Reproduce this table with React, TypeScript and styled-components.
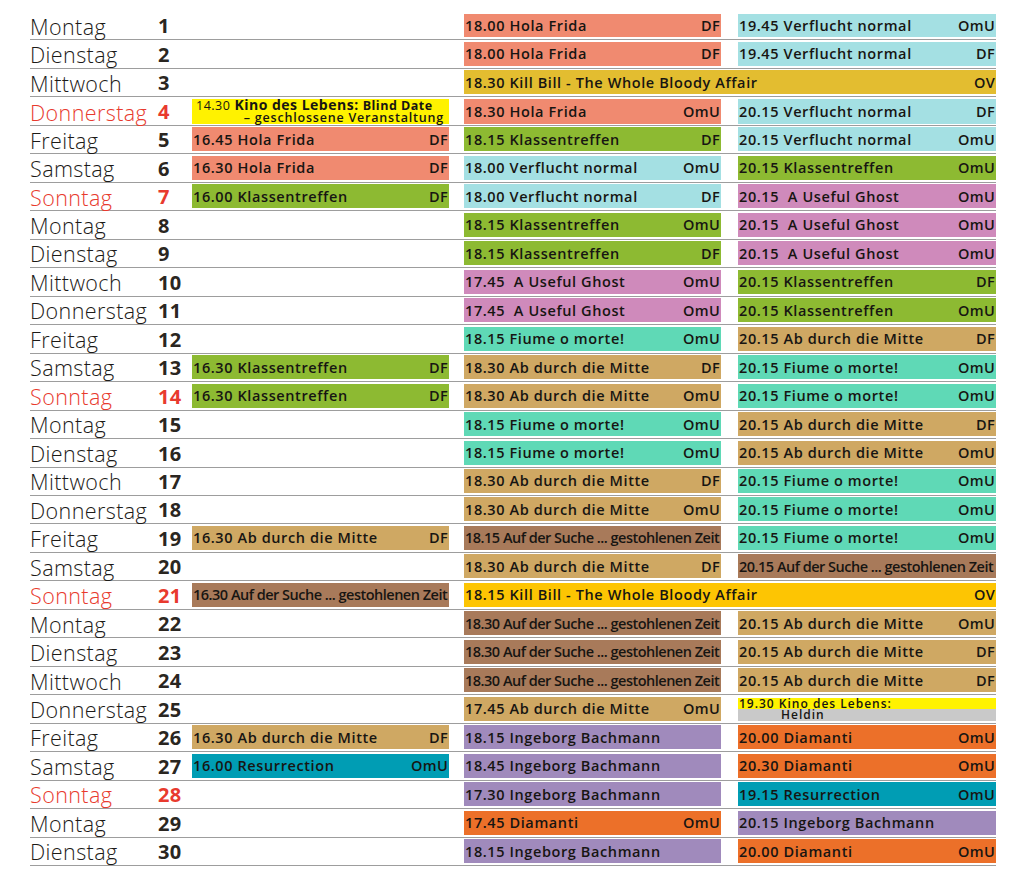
import React from 'react';
import styled, { createGlobalStyle } from 'styled-components';

const GlobalStyle = createGlobalStyle`
  html, body {
    margin: 0;
    padding: 0;
    background: #ffffff;
  }
  body {
    font-family: 'Open Sans', 'Liberation Sans', sans-serif;
    color: #1c1a17;
  }
`;

type Col = 1 | 2 | 3 | 'span';

type Show = {
  col: Col;
  text: string;
  tag?: string;
  color: string;
  tight?: boolean;
};

type Day = {
  name: string;
  no: number;
  sunday?: boolean;
  shows: Show[];
  special?: 'blinddate' | 'heldin';
};

const C = {
  frida: '#f08a70',
  verflucht: '#a4e0e3',
  killbill: '#e3bd30',
  killbill2: '#fdc503',
  klassen: '#8dba32',
  ghost: '#cf8abb',
  fiume: '#5fd9b6',
  mitte: '#cfa863',
  suche: '#a87a5a',
  bachmann: '#a08abc',
  diamanti: '#ec7029',
  resurrection: '#009db4',
};

const SUCHE = 'Auf der Suche ... gestohlenen Zeit';

const days: Day[] = [
  { name: 'Montag', no: 1, shows: [
    { col: 2, text: '18.00 Hola Frida', tag: 'DF', color: C.frida },
    { col: 3, text: '19.45 Verflucht normal', tag: 'OmU', color: C.verflucht },
  ] },
  { name: 'Dienstag', no: 2, shows: [
    { col: 2, text: '18.00 Hola Frida', tag: 'DF', color: C.frida },
    { col: 3, text: '19.45 Verflucht normal', tag: 'DF', color: C.verflucht },
  ] },
  { name: 'Mittwoch', no: 3, shows: [
    { col: 'span', text: '18.30 Kill Bill - The Whole Bloody Affair', tag: 'OV', color: C.killbill },
  ] },
  { name: 'Donnerstag', no: 4, sunday: true, special: 'blinddate', shows: [
    { col: 2, text: '18.30 Hola Frida', tag: 'OmU', color: C.frida },
    { col: 3, text: '20.15 Verflucht normal', tag: 'DF', color: C.verflucht },
  ] },
  { name: 'Freitag', no: 5, shows: [
    { col: 1, text: '16.45 Hola Frida', tag: 'DF', color: C.frida },
    { col: 2, text: '18.15 Klassentreffen', tag: 'DF', color: C.klassen },
    { col: 3, text: '20.15 Verflucht normal', tag: 'OmU', color: C.verflucht },
  ] },
  { name: 'Samstag', no: 6, shows: [
    { col: 1, text: '16.30 Hola Frida', tag: 'DF', color: C.frida },
    { col: 2, text: '18.00 Verflucht normal', tag: 'OmU', color: C.verflucht },
    { col: 3, text: '20.15 Klassentreffen', tag: 'OmU', color: C.klassen },
  ] },
  { name: 'Sonntag', no: 7, sunday: true, shows: [
    { col: 1, text: '16.00 Klassentreffen', tag: 'DF', color: C.klassen },
    { col: 2, text: '18.00 Verflucht normal', tag: 'DF', color: C.verflucht },
    { col: 3, text: '20.15  A Useful Ghost', tag: 'OmU', color: C.ghost },
  ] },
  { name: 'Montag', no: 8, shows: [
    { col: 2, text: '18.15 Klassentreffen', tag: 'OmU', color: C.klassen },
    { col: 3, text: '20.15  A Useful Ghost', tag: 'OmU', color: C.ghost },
  ] },
  { name: 'Dienstag', no: 9, shows: [
    { col: 2, text: '18.15 Klassentreffen', tag: 'DF', color: C.klassen },
    { col: 3, text: '20.15  A Useful Ghost', tag: 'OmU', color: C.ghost },
  ] },
  { name: 'Mittwoch', no: 10, shows: [
    { col: 2, text: '17.45  A Useful Ghost', tag: 'OmU', color: C.ghost },
    { col: 3, text: '20.15 Klassentreffen', tag: 'DF', color: C.klassen },
  ] },
  { name: 'Donnerstag', no: 11, shows: [
    { col: 2, text: '17.45  A Useful Ghost', tag: 'OmU', color: C.ghost },
    { col: 3, text: '20.15 Klassentreffen', tag: 'OmU', color: C.klassen },
  ] },
  { name: 'Freitag', no: 12, shows: [
    { col: 2, text: '18.15 Fiume o morte!', tag: 'OmU', color: C.fiume },
    { col: 3, text: '20.15 Ab durch die Mitte', tag: 'DF', color: C.mitte },
  ] },
  { name: 'Samstag', no: 13, shows: [
    { col: 1, text: '16.30 Klassentreffen', tag: 'DF', color: C.klassen },
    { col: 2, text: '18.30 Ab durch die Mitte', tag: 'DF', color: C.mitte },
    { col: 3, text: '20.15 Fiume o morte!', tag: 'OmU', color: C.fiume },
  ] },
  { name: 'Sonntag', no: 14, sunday: true, shows: [
    { col: 1, text: '16.30 Klassentreffen', tag: 'DF', color: C.klassen },
    { col: 2, text: '18.30 Ab durch die Mitte', tag: 'OmU', color: C.mitte },
    { col: 3, text: '20.15 Fiume o morte!', tag: 'OmU', color: C.fiume },
  ] },
  { name: 'Montag', no: 15, shows: [
    { col: 2, text: '18.15 Fiume o morte!', tag: 'OmU', color: C.fiume },
    { col: 3, text: '20.15 Ab durch die Mitte', tag: 'DF', color: C.mitte },
  ] },
  { name: 'Dienstag', no: 16, shows: [
    { col: 2, text: '18.15 Fiume o morte!', tag: 'OmU', color: C.fiume },
    { col: 3, text: '20.15 Ab durch die Mitte', tag: 'OmU', color: C.mitte },
  ] },
  { name: 'Mittwoch', no: 17, shows: [
    { col: 2, text: '18.30 Ab durch die Mitte', tag: 'DF', color: C.mitte },
    { col: 3, text: '20.15 Fiume o morte!', tag: 'OmU', color: C.fiume },
  ] },
  { name: 'Donnerstag', no: 18, shows: [
    { col: 2, text: '18.30 Ab durch die Mitte', tag: 'OmU', color: C.mitte },
    { col: 3, text: '20.15 Fiume o morte!', tag: 'OmU', color: C.fiume },
  ] },
  { name: 'Freitag', no: 19, shows: [
    { col: 1, text: '16.30 Ab durch die Mitte', tag: 'DF', color: C.mitte },
    { col: 2, text: '18.15 ' + SUCHE, color: C.suche, tight: true },
    { col: 3, text: '20.15 Fiume o morte!', tag: 'OmU', color: C.fiume },
  ] },
  { name: 'Samstag', no: 20, shows: [
    { col: 2, text: '18.30 Ab durch die Mitte', tag: 'DF', color: C.mitte },
    { col: 3, text: '20.15 ' + SUCHE, color: C.suche, tight: true },
  ] },
  { name: 'Sonntag', no: 21, sunday: true, shows: [
    { col: 1, text: '16.30 ' + SUCHE, color: C.suche, tight: true },
    { col: 'span', text: '18.15 Kill Bill - The Whole Bloody Affair', tag: 'OV', color: C.killbill2 },
  ] },
  { name: 'Montag', no: 22, shows: [
    { col: 2, text: '18.30 ' + SUCHE, color: C.suche, tight: true },
    { col: 3, text: '20.15 Ab durch die Mitte', tag: 'OmU', color: C.mitte },
  ] },
  { name: 'Dienstag', no: 23, shows: [
    { col: 2, text: '18.30 ' + SUCHE, color: C.suche, tight: true },
    { col: 3, text: '20.15 Ab durch die Mitte', tag: 'DF', color: C.mitte },
  ] },
  { name: 'Mittwoch', no: 24, shows: [
    { col: 2, text: '18.30 ' + SUCHE, color: C.suche, tight: true },
    { col: 3, text: '20.15 Ab durch die Mitte', tag: 'DF', color: C.mitte },
  ] },
  { name: 'Donnerstag', no: 25, special: 'heldin', shows: [
    { col: 2, text: '17.45 Ab durch die Mitte', tag: 'OmU', color: C.mitte },
  ] },
  { name: 'Freitag', no: 26, shows: [
    { col: 1, text: '16.30 Ab durch die Mitte', tag: 'DF', color: C.mitte },
    { col: 2, text: '18.15 Ingeborg Bachmann', color: C.bachmann },
    { col: 3, text: '20.00 Diamanti', tag: 'OmU', color: C.diamanti },
  ] },
  { name: 'Samstag', no: 27, shows: [
    { col: 1, text: '16.00 Resurrection', tag: 'OmU', color: C.resurrection },
    { col: 2, text: '18.45 Ingeborg Bachmann', color: C.bachmann },
    { col: 3, text: '20.30 Diamanti', tag: 'OmU', color: C.diamanti },
  ] },
  { name: 'Sonntag', no: 28, sunday: true, shows: [
    { col: 2, text: '17.30 Ingeborg Bachmann', color: C.bachmann },
    { col: 3, text: '19.15 Resurrection', tag: 'OmU', color: C.resurrection },
  ] },
  { name: 'Montag', no: 29, shows: [
    { col: 2, text: '17.45 Diamanti', tag: 'OmU', color: C.diamanti },
    { col: 3, text: '20.15 Ingeborg Bachmann', color: C.bachmann },
  ] },
  { name: 'Dienstag', no: 30, shows: [
    { col: 2, text: '18.15 Ingeborg Bachmann', color: C.bachmann },
    { col: 3, text: '20.00 Diamanti', tag: 'OmU', color: C.diamanti },
  ] },
];

const gridColumn = (col: Col) => {
  if (col === 1) return '3';
  if (col === 2) return '5';
  if (col === 3) return '7';
  return '5 / 8';
};

const Schedule = styled.div`
  width: 966px;
  margin: 12px 0 0 30px;
  display: grid;
  grid-template-rows: repeat(30, 28.47px);
`;

const Row = styled.div`
  display: grid;
  grid-template-columns: 128px 34px 257px 15px 257px 17px 258px;
  padding: 1.5px 0 2px;
  border-bottom: 1px solid #9d9d9d;
  box-sizing: border-box;
`;

const DayName = styled.div<{ $red?: boolean }>`
  grid-column: 1;
  align-self: center;
  font-size: 21.5px;
  font-weight: 300;
  letter-spacing: 0.4px;
  line-height: 1;
  padding-top: 2px;
  color: ${(p) => (p.$red ? '#e83a2e' : '#1c1a17')};
`;

const DayNo = styled.div<{ $red?: boolean }>`
  grid-column: 2;
  align-self: center;
  font-size: 20px;
  font-weight: 700;
  letter-spacing: 0.3px;
  line-height: 1;
  padding-top: 2px;
  color: ${(p) => (p.$red ? '#e83a2e' : '#2a2621')};
`;

const Cell = styled.div<{ $col: Col; $bg: string }>`
  grid-column: ${(p) => gridColumn(p.$col)};
  background: ${(p) => p.$bg};
  display: flex;
  align-items: center;
  justify-content: space-between;
  padding: 0 1px;
  font-size: 14.5px;
  font-weight: 600;
  letter-spacing: 0.6px;
  color: #171512;
  white-space: pre;
  overflow: hidden;
`;

const Title = styled.span<{ $tight?: boolean }>`
  letter-spacing: ${(p) => (p.$tight ? '-0.5px' : 'inherit')};
`;

const Tag = styled.span`
  font-weight: 600;
  letter-spacing: 0.3px;
`;

const BlindDate = styled.div`
  grid-column: 3;
  background: #fff200;
  display: flex;
  flex-direction: column;
  justify-content: center;
  padding: 0 5px 0 4px;
  line-height: 12px;
  color: #171512;
`;

const BlindTop = styled.div`
  display: flex;
  align-items: baseline;
  gap: 4px;
  font-size: 12.5px;
  letter-spacing: 0.5px;
`;

const BlindTime = styled.span`
  font-weight: 400;
`;

const BlindTitle = styled.span`
  font-size: 14px;
  font-weight: 700;
  letter-spacing: 0.5px;
`;

const BlindSub = styled.span`
  font-weight: 700;
`;

const BlindBottom = styled.div`
  text-align: right;
  font-size: 12.5px;
  font-weight: 600;
  letter-spacing: 0.8px;
`;

const Heldin = styled.div`
  grid-column: 7;
  display: grid;
  grid-template-rows: 1fr 1fr;
  font-size: 12px;
  font-weight: 600;
  letter-spacing: 1px;
  line-height: 11.5px;
  color: #171512;
  margin-top: 1px;
`;

const HeldinTop = styled.div`
  background: #fff200;
  padding-left: 1px;
  white-space: pre;
`;

const HeldinBottom = styled.div`
  background: #c9c9c9;
  padding-left: 43px;
`;

const App: React.FC = () => {
  return (
    <>
      <GlobalStyle />
      <Schedule>
        {days.map((day) => (
          <Row key={day.no}>
            <DayName $red={day.sunday}>{day.name}</DayName>
            <DayNo $red={day.sunday}>{day.no}</DayNo>
            {day.special === 'blinddate' && (
              <BlindDate>
                <BlindTop>
                  <BlindTime>14.30</BlindTime>
                  <BlindTitle>Kino des Lebens:</BlindTitle>
                  <BlindSub>Blind Date</BlindSub>
                </BlindTop>
                <BlindBottom>– geschlossene Veranstaltung</BlindBottom>
              </BlindDate>
            )}
            {day.shows.map((show) => (
              <Cell key={String(show.col)} $col={show.col} $bg={show.color}>
                <Title $tight={show.tight}>{show.text}</Title>
                {show.tag && <Tag>{show.tag}</Tag>}
              </Cell>
            ))}
            {day.special === 'heldin' && (
              <Heldin>
                <HeldinTop>{'19.30 Kino des Lebens:'}</HeldinTop>
                <HeldinBottom>Heldin</HeldinBottom>
              </Heldin>
            )}
          </Row>
        ))}
      </Schedule>
    </>
  );
};

export default App;
